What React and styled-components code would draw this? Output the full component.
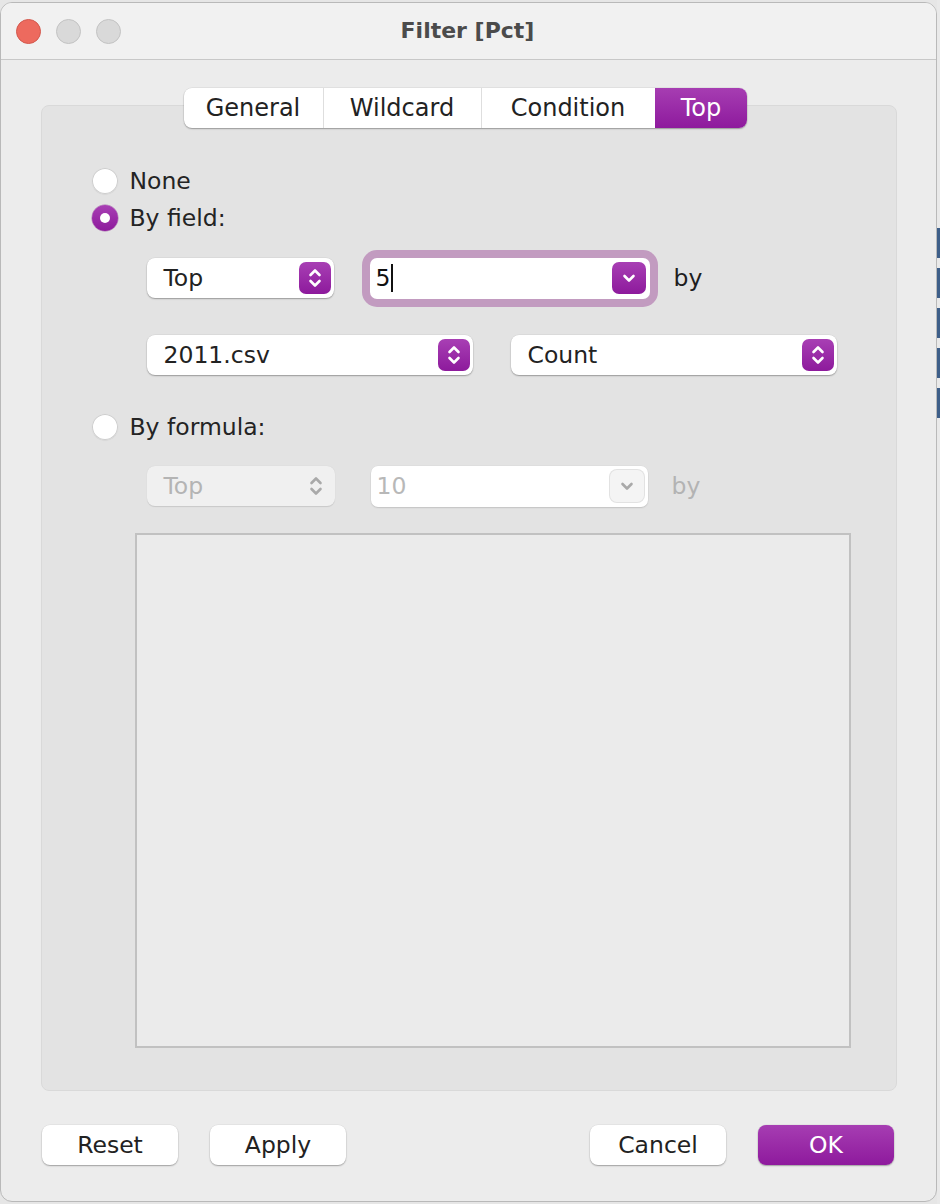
import React from "react"
import styled, { createGlobalStyle } from "styled-components"

const GlobalStyle = createGlobalStyle`
    html, body {
        margin: 0;
        padding: 0;
        background: #e6e6e6;
        font-family: "DejaVu Sans", "Noto Sans", sans-serif;
    }
    * { box-sizing: border-box; }
`

function UpDown({ disabled }) {
    const c = disabled ? "#a9a9a9" : "#ffffff"
    return (
        <svg width="14" height="22" viewBox="0 0 14 22">
            <path d="M2.5 8 L7 3.5 L11.5 8" fill="none" stroke={c} strokeWidth="2.6" strokeLinecap="round" strokeLinejoin="round" />
            <path d="M2.5 14 L7 18.5 L11.5 14" fill="none" stroke={c} strokeWidth="2.6" strokeLinecap="round" strokeLinejoin="round" />
        </svg>
    )
}

function Down({ disabled }) {
    const c = disabled ? "#a9a9a9" : "#ffffff"
    return (
        <svg width="14" height="10" viewBox="0 0 14 10">
            <path d="M2.5 3 L7 7.5 L11.5 3" fill="none" stroke={c} strokeWidth="2.6" strokeLinecap="round" strokeLinejoin="round" />
        </svg>
    )
}

function Select({ value, width, disabled }) {
    return (
        <SelectBox width={width} disabled={disabled}>
            <span>{value}</span>
            <Stepper disabled={disabled}><UpDown disabled={disabled} /></Stepper>
        </SelectBox>
    )
}

function Combo({ value, width, focused, disabled }) {
    return (
        <ComboBox width={width} focused={focused} disabled={disabled}>
            <span>{value}{focused && <Caret />}</span>
            <DropButton disabled={disabled}><Down disabled={disabled} /></DropButton>
        </ComboBox>
    )
}

function Radio({ checked, label }) {
    return (
        <OptionRow>
            <RadioDot checked={checked} />
            <span>{label}</span>
        </OptionRow>
    )
}

const tabs = [
    { label: "General", width: 139 },
    { label: "Wildcard", width: 158 },
    { label: "Condition", width: 174 },
    { label: "Top", width: 92 },
]

export default function App() {
    return (
        <Page>
            <GlobalStyle />
            <Window>
                <TitleBar>
                    <Lights>
                        <Light color="#ed6a5e" edge="#d3584d" />
                        <Light color="#d9d9d9" edge="#c3c3c3" />
                        <Light color="#d9d9d9" edge="#c3c3c3" />
                    </Lights>
                    <Title>Filter [Pct]</Title>
                    <div />
                </TitleBar>

                <Body>
                    <Tabs>
                        {tabs.map(t => (
                            <Tab key={t.label} width={t.width} active={t.label === "Top"}>{t.label}</Tab>
                        ))}
                    </Tabs>

                    <Group>
                        <Radio label="None" />
                        <Radio checked label="By field:" />

                        <FieldRow top={22}>
                            <Select value="Top" width={187} />
                            <Combo value="5" width={280} focused />
                            <By>by</By>
                        </FieldRow>
                        <FieldRow top={37} pair>
                            <Select value="2011.csv" width={326} />
                            <Select value="Count" width={326} />
                        </FieldRow>

                        <Spacer h={33} />
                        <Radio label="By formula:" />

                        <FieldRow top={21}>
                            <Select value="Top" width={188} disabled />
                            <Combo value="10" width={277} disabled />
                            <By disabled>by</By>
                        </FieldRow>

                        <FormulaArea />
                    </Group>
                </Body>

                <Footer>
                    <ButtonGroup>
                        <Button>Reset</Button>
                        <Button>Apply</Button>
                    </ButtonGroup>
                    <ButtonGroup>
                        <Button>Cancel</Button>
                        <Button primary>OK</Button>
                    </ButtonGroup>
                </Footer>
            </Window>

            <Backdrop>
                {[0, 1, 2, 3, 4].map(i => <BackBar key={i} />)}
            </Backdrop>
        </Page>
    )
}

const Page = styled.div`
    width: 940px;
    height: 1204px;
    display: flex;
    overflow: hidden;
`

const Window = styled.div`
    width: 937px;
    height: 1200px;
    margin-top: 2px;
    flex-shrink: 0;
    border: 1px solid #b9b9b9;
    border-radius: 12px;
    overflow: hidden;
    background: #ececec;
    display: flex;
    flex-direction: column;
`

const TitleBar = styled.div`
    height: 57px;
    flex-shrink: 0;
    background: #f1f1f1;
    border-bottom: 1px solid #c8c8c8;
    display: grid;
    grid-template-columns: 1fr auto 1fr;
    align-items: center;
`

const Lights = styled.div`
    display: flex;
    gap: 15px;
    padding-left: 15px;
`

const Light = styled.div`
    width: 25px;
    height: 25px;
    border-radius: 50%;
    background: ${p => p.color};
    border: 1px solid ${p => p.edge};
`

const Title = styled.div`
    font-size: 22px;
    font-weight: 700;
    color: #4b4b4b;
    padding-right: 2px;
    margin-top: -2px;
`

const Body = styled.div`
    padding: 28px 40px 0;
    display: flex;
    flex-direction: column;
    align-items: center;
`

const Tabs = styled.div`
    position: relative;
    z-index: 1;
    height: 40px;
    display: flex;
    background: #ffffff;
    border-radius: 8px;
    box-shadow: 0 1px 1.5px rgba(0, 0, 0, 0.3), 0 0 0 0.5px rgba(0, 0, 0, 0.08);
    overflow: hidden;
    margin-right: 7px;
`

const Tab = styled.div`
    width: ${p => p.width}px;
    display: flex;
    align-items: center;
    justify-content: center;
    font-size: 24px;
    color: ${p => p.active ? "#ffffff" : "#222222"};
    background: ${p => p.active ? "linear-gradient(#a63db2, #8e1a9d)" : "transparent"};
    border-left: 1px solid ${p => p.active ? "transparent" : "#dedede"};

    &:first-child {
        border-left: none;
    }
`

const Group = styled.div`
    width: 856px;
    height: 986px;
    margin-top: -23px;
    padding: 56px 0 0 50px;
    background: #e3e3e3;
    border: 1px solid #d9d9d9;
    border-radius: 8px;
    display: flex;
    flex-direction: column;
`

const OptionRow = styled.div`
    height: 37px;
    display: flex;
    align-items: center;
    gap: 12px;
    font-size: 23.5px;
    color: #242424;
`

const RadioDot = styled.div`
    width: 26px;
    height: 26px;
    border-radius: 50%;
    flex-shrink: 0;
    display: flex;
    align-items: center;
    justify-content: center;
    background: ${p => p.checked ? "linear-gradient(#a83fb4, #8d1a9c)" : "#ffffff"};
    box-shadow: ${p => p.checked
        ? "0 0 0 0.5px rgba(120, 20, 130, 0.5)"
        : "inset 0 0 0 1px #cdcdcd, 0 0.5px 1px rgba(0, 0, 0, 0.1)"};

    &::after {
        content: "";
        display: ${p => p.checked ? "block" : "none"};
        width: 10px;
        height: 10px;
        border-radius: 50%;
        background: #ffffff;
    }
`

const Spacer = styled.div`
    height: ${p => p.h}px;
    flex-shrink: 0;
`

const FieldRow = styled.div`
    height: 40px;
    margin-top: ${p => p.top}px;
    margin-left: 55px;
    display: flex;
    align-items: center;
    gap: ${p => p.pair ? 38 : 36}px;
`

const SelectBox = styled.div`
    width: ${p => p.width}px;
    height: 40px;
    flex-shrink: 0;
    border-radius: 8px;
    padding: 0 3px 0 17px;
    display: flex;
    align-items: center;
    justify-content: space-between;
    font-size: 23.5px;
    color: ${p => p.disabled ? "#b4b4b4" : "#222222"};
    background: ${p => p.disabled ? "#f0f0f0" : "#ffffff"};
    box-shadow: ${p => p.disabled
        ? "0 0.5px 1px rgba(0, 0, 0, 0.12)"
        : "0 1px 1.5px rgba(0, 0, 0, 0.3), 0 0 0 0.5px rgba(0, 0, 0, 0.06)"};
`

const Stepper = styled.div`
    width: 32px;
    height: 32px;
    border-radius: 7px;
    display: flex;
    align-items: center;
    justify-content: center;
    background: ${p => p.disabled ? "transparent" : "linear-gradient(#a83fb4, #8d1a9c)"};
`

const ComboBox = styled.div`
    width: ${p => p.width}px;
    height: 41px;
    flex-shrink: 0;
    border-radius: 7px;
    padding: 0 4px 0 6px;
    display: flex;
    align-items: center;
    justify-content: space-between;
    font-size: 23.5px;
    color: ${p => p.disabled ? "#b8b8b8" : "#111111"};
    background: #ffffff;
    box-shadow: ${p => p.focused
        ? "0 0 0 8px #c29bc0, 0 1px 1px rgba(0, 0, 0, 0.2)"
        : "0 1px 1.5px rgba(0, 0, 0, 0.12), 0 0 0 0.5px rgba(0, 0, 0, 0.04)"};

    span {
        display: flex;
        align-items: center;
    }
`

const Caret = styled.i`
    display: inline-block;
    width: 2px;
    height: 28px;
    margin-left: 1px;
    background: #111111;
`

const DropButton = styled.div`
    width: 34px;
    height: 32px;
    border-radius: 7px;
    display: flex;
    align-items: center;
    justify-content: center;
    background: ${p => p.disabled ? "#f4f4f4" : "linear-gradient(#a83fb4, #8d1a9c)"};
    box-shadow: ${p => p.disabled ? "0 0 0 1px #e2e2e2" : "none"};
`

const By = styled.span`
    font-size: 23.5px;
    margin-left: -12px;
    color: ${p => p.disabled ? "#b3b3b3" : "#1e1e1e"};
`

const FormulaArea = styled.div`
    width: 716px;
    height: 515px;
    margin-top: 27px;
    margin-left: 43px;
    background: #ebebeb;
    border: 2px solid #c1c1c1;
`

const Footer = styled.div`
    padding: 34px 42px 0 41px;
    display: flex;
    justify-content: space-between;
`

const ButtonGroup = styled.div`
    display: flex;
    gap: 32px;
`

const Button = styled.div`
    width: 136px;
    height: 40px;
    border-radius: 8px;
    display: flex;
    align-items: center;
    justify-content: center;
    font-size: 23.5px;
    color: ${p => p.primary ? "#ffffff" : "#222222"};
    background: ${p => p.primary ? "linear-gradient(#a63db2, #8e1a9d)" : "#ffffff"};
    box-shadow: 0 1px 1.5px rgba(0, 0, 0, 0.3), 0 0 0 0.5px rgba(0, 0, 0, 0.06);
`

const Backdrop = styled.div`
    flex: 1;
    padding-top: 228px;
    background: #e9e9e9;
    display: flex;
    flex-direction: column;
    gap: 10px;
`

const BackBar = styled.div`
    height: 30px;
    background: #3e5f89;
`
